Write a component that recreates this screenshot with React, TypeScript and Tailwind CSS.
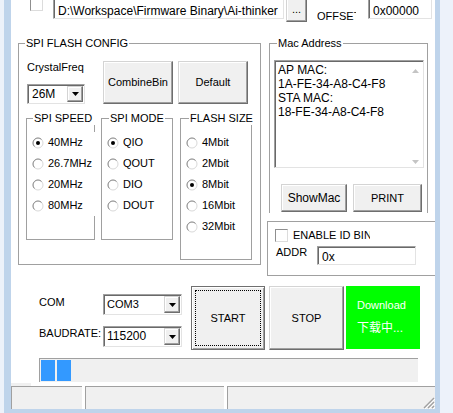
import type { ReactNode } from "react";

const sunken =
    "bg-white border border-t-[#a0a0a0] border-l-[#a0a0a0] border-r-[#e3e3e3] border-b-[#e3e3e3] shadow-[inset_1px_1px_0_#696969]";
const raised =
    "bg-[#f0f0f0] border border-t-[#d4d4d4] border-l-[#d4d4d4] border-r-[#6e6e6e] border-b-[#6e6e6e] shadow-[inset_-1px_-1px_0_#a0a0a0,inset_1px_1px_0_#ffffff]";

function CheckBox() {
    return (
        <div className="w-[13px] h-[13px] shrink-0 bg-white border border-t-[#8f8f8f] border-l-[#8f8f8f] border-r-[#dcdcdc] border-b-[#dcdcdc]" />
    );
}

function Radio({ label, checked }: { label: string; checked?: boolean }) {
    return (
        <div className="flex items-center h-[21px] pl-[5px] gap-[4px] whitespace-nowrap">
            <svg width="12" height="12" viewBox="0 0 12 12" className="shrink-0">
                <circle cx="6" cy="6" r="5" fill="#fff" stroke="#d9d9d9" />
                <path d="M2.46 9.54A5 5 0 0 1 9.54 2.46" fill="none" stroke="#8c8c8c" />
                {checked && <circle cx="6" cy="6" r="2" fill="#000" />}
            </svg>
            <span>{label}</span>
        </div>
    );
}

function Group({
    title,
    titleClass,
    className,
    children,
}: {
    title: string;
    titleClass: string;
    className: string;
    children?: ReactNode;
}) {
    return (
        <div className={`relative shrink-0 border-[#a0a0a0] ${className}`}>
            <span className={`absolute -top-[7px] bg-white px-[1px] whitespace-nowrap ${titleClass}`}>{title}</span>
            {children}
        </div>
    );
}

function Combo({ value, className, textClass }: { value: string; className: string; textClass?: string }) {
    return (
        <div className={`flex shrink-0 p-[1px] ${sunken} ${className}`}>
            <span className={`flex-1 flex items-center pl-[2px] whitespace-nowrap ${textClass ?? ""}`}>{value}</span>
            <span className={`w-[16px] flex items-center justify-center ${raised}`}>
                <svg width="7" height="4" viewBox="0 0 7 4">
                    <path d="M0 0h7L3.5 4z" fill="#000" />
                </svg>
            </span>
        </div>
    );
}

function Button({ label, className }: { label: string; className: string }) {
    return <div className={`flex items-center justify-center shrink-0 ${raised} ${className}`}>{label}</div>;
}

export default function App() {
    return (
        <div className="flex w-[453px] h-[413px] overflow-hidden bg-[#edf2fa] font-['Liberation_Sans',Arial,sans-serif] text-[11px] leading-[13px] text-black select-none">
            <div className="w-[4px] shrink-0" />
            <div className="flex flex-col w-[436px] shrink-0">
                <div className="flex h-[409px]">
                    <div className="w-[7px] shrink-0 bg-[#bfd4eb]" />
                    <div className="w-[424px] shrink-0 bg-white overflow-hidden flex flex-col">
                        {/* file row */}
                        <div className="flex items-start -mt-[3px] h-[25px] shrink-0">
                            <div className="ml-[19px] mt-[1px]">
                                <CheckBox />
                            </div>
                            <div
                                className={`ml-[10px] w-[231px] h-[22px] shrink-0 pl-[4px] pt-[6px] text-[12px] leading-[14px] whitespace-nowrap overflow-hidden ${sunken}`}
                            >
                                D:\Workspace\Firmware Binary\Ai-thinker
                            </div>
                            <div className={`ml-[2px] w-[21px] h-[25px] shrink-0 flex justify-center pt-[5px] ${raised}`}>...</div>
                            <div className="ml-[10px] mt-[13px] w-[39px] shrink-0 overflow-hidden whitespace-nowrap">OFFSET</div>
                            <div className={`ml-[12px] w-[64px] h-[22px] shrink-0 pl-[4px] pt-[6px] text-[12px] leading-[14px] ${sunken}`}>
                                0x00000
                            </div>
                        </div>

                        {/* config groups */}
                        <div className="flex items-start mt-[21px] shrink-0">
                            <Group title="SPI FLASH CONFIG" titleClass="left-[6px]" className="ml-[7px] w-[243px] h-[222px] border">
                                <div className="flex items-start mt-[17px]">
                                    <div className="ml-[8px] w-[58px] shrink-0 flex flex-col">
                                        <span>CrystalFreq</span>
                                        <Combo value="26M" className="mt-[10px] w-[58px] h-[20px]" textClass="text-[12px] pl-[3px]" />
                                    </div>
                                    <Button label="CombineBin" className="ml-[18px] w-[70px] h-[43px]" />
                                    <Button label="Default" className="ml-[5px] w-[70px] h-[43px]" />
                                </div>
                                <div className="flex items-start mt-[14px] ml-[7px]">
                                    <Group title="SPI SPEED" titleClass="left-[6px] pr-[4px]" className="w-[69px] h-[122px] border">
                                        <div className="relative bg-white -mr-[3px] mt-[13px]">
                                            <Radio label="40MHz" checked />
                                            <Radio label="26.7MHz" />
                                            <Radio label="20MHz" />
                                            <Radio label="80MHz" />
                                        </div>
                                    </Group>
                                    <Group title="SPI MODE" titleClass="left-[7px]" className="ml-[6px] w-[72px] h-[122px] border">
                                        <div className="mt-[13px]">
                                            <Radio label="QIO" checked />
                                            <Radio label="QOUT" />
                                            <Radio label="DIO" />
                                            <Radio label="DOUT" />
                                        </div>
                                    </Group>
                                    <Group title="FLASH SIZE" titleClass="left-[8px]" className="ml-[7px] w-[72px] h-[142px] border">
                                        <div className="mt-[13px]">
                                            <Radio label="4Mbit" />
                                            <Radio label="2Mbit" />
                                            <Radio label="8Mbit" checked />
                                            <Radio label="16Mbit" />
                                            <Radio label="32Mbit" />
                                        </div>
                                    </Group>
                                </div>
                            </Group>

                            <div className="ml-[6px] flex flex-col shrink-0">
                                <Group
                                    title="Mac Address"
                                    titleClass="left-[7px]"
                                    className="ml-[2px] w-[159px] h-[170px] border-t border-l border-r flex flex-col"
                                >
                                    <div className={`ml-[4px] mt-[16px] w-[150px] h-[108px] flex ${sunken}`}>
                                        <div className="flex-1 pl-[3px] pt-[2px] text-[12px] leading-[14px] whitespace-nowrap">
                                            <div>AP MAC:</div>
                                            <div>1A-FE-34-A8-C4-F8</div>
                                            <div>STA MAC:</div>
                                            <div>18-FE-34-A8-C4-F8</div>
                                        </div>
                                        <div className="w-[16px] flex flex-col justify-between items-center pt-[8px] pb-[3px]">
                                            <svg width="7" height="4" viewBox="0 0 7 4">
                                                <path d="M0 4h7L3.5 0z" fill="#c4c4c4" />
                                            </svg>
                                            <svg width="7" height="4" viewBox="0 0 7 4">
                                                <path d="M0 0h7L3.5 4z" fill="#c4c4c4" />
                                            </svg>
                                        </div>
                                    </div>
                                    <div className="flex mt-[16px]">
                                        <Button label="ShowMac" className="ml-[11px] w-[66px] h-[28px] text-[12px]" />
                                        <Button label="PRINT" className="ml-[6px] w-[69px] h-[28px]" />
                                    </div>
                                </Group>

                                <div className="mt-[8px] w-[175px] h-[55px] border border-[#a0a0a0] flex flex-col">
                                    <div className="flex items-center ml-[7px] mt-[7px] h-[13px]">
                                        <CheckBox />
                                        <span className="ml-[5px] w-[77px] overflow-hidden whitespace-nowrap">ENABLE ID BIN</span>
                                    </div>
                                    <div className="flex items-start ml-[8px] mt-[4px]">
                                        <span className="w-[41px] shrink-0">ADDR</span>
                                        <div className={`w-[99px] h-[19px] pl-[4px] pt-[3px] text-[12px] leading-[14px] ${sunken}`}>0x</div>
                                    </div>
                                </div>
                            </div>
                        </div>

                        {/* port + actions */}
                        <div className="flex items-start mt-[10px] ml-[28px] shrink-0">
                            <div className="w-[143px] shrink-0 flex flex-col">
                                <div className="flex items-start mt-[8px]">
                                    <span className="w-[64px] mt-[2px] shrink-0">COM</span>
                                    <Combo value="COM3" className="w-[79px] h-[21px]" />
                                </div>
                                <div className="flex items-start mt-[11px]">
                                    <span className="w-[64px] mt-[1px] shrink-0 overflow-hidden whitespace-nowrap">BAUDRATE:</span>
                                    <Combo value="115200" className="w-[79px] h-[21px]" textClass="text-[12px]" />
                                </div>
                            </div>
                            <div className="ml-[9px] w-[74px] h-[64px] shrink-0 flex bg-[#f0f0f0] border border-[#6f6f6f] p-[3px] shadow-[inset_1px_1px_0_#ffffff,inset_-1px_-1px_0_#a0a0a0]">
                                <div className="flex-1 flex items-center justify-center border border-dotted border-black">START</div>
                            </div>
                            <Button label="STOP" className="ml-[4px] w-[75px] h-[64px]" />
                            <div className="ml-[2px] w-[74px] h-[63px] shrink-0 bg-[#00ff00] text-white pl-[11px] pt-[13px] flex flex-col">
                                <span>Download</span>
                                <span className="mt-[10px] text-[12px] font-['Liberation_Sans','Noto_Sans_CJK_SC',sans-serif]">下载中...</span>
                            </div>
                        </div>

                        {/* progress */}
                        <div className="mt-[8px] ml-[28px] w-[379px] h-[24px] shrink-0 bg-[#f0f0f0] border-t border-l border-[#a0a0a0] flex gap-[2px] pl-[1px] pt-[1px]">
                            <div className="w-[14px] h-[21px] bg-[#3399ff]" />
                            <div className="w-[14px] h-[21px] bg-[#3399ff]" />
                        </div>

                        {/* status bar */}
                        <div className="mt-[1px] w-[20px] h-[3px] shrink-0 bg-[#f0f0f0]" />
                        <div className="h-[23px] shrink-0 flex gap-[3px]">
                            <div className="w-[71px] bg-[#f0f0f0] border-t border-l border-[#a0a0a0]" />
                            <div className="w-[139px] bg-[#f0f0f0] border-t border-l border-[#a0a0a0]" />
                            <div className="flex-1 bg-[#f0f0f0] border-t border-l border-[#a0a0a0] flex justify-end items-end">
                                <svg width="13" height="13" viewBox="0 0 13 13">
                                    <path d="M12 2L2 12M12 6L6 12M12 10L10 12" stroke="#a0a0a0" strokeWidth="1.4" />
                                    <path d="M13 3L3 13M13 7L7 13M13 11L11 13" stroke="#ffffff" strokeWidth="1" />
                                </svg>
                            </div>
                        </div>
                    </div>
                    <div className="w-[5px] shrink-0 bg-[#bfd4eb]" />
                </div>
                <div className="h-[4px] bg-[#bfd4eb]" />
            </div>
            <div className="w-[13px] shrink-0" />
        </div>
    );
}
